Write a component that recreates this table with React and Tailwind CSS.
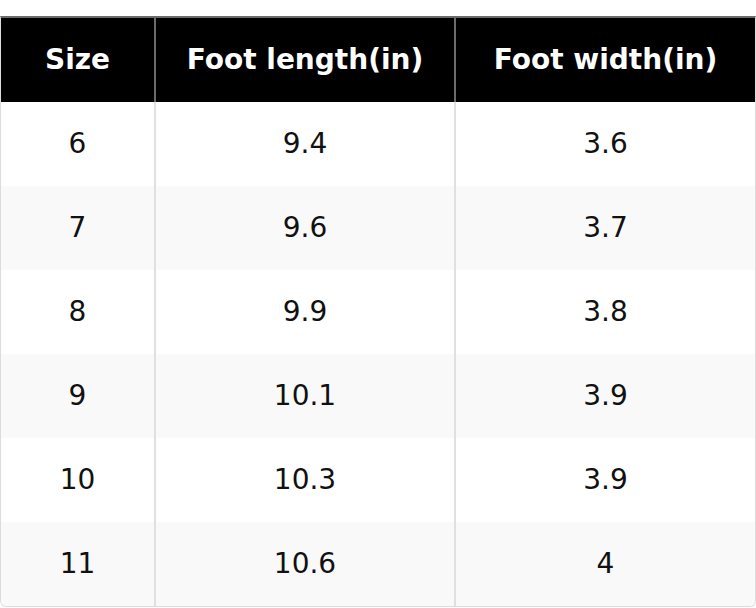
import React from "react";

const rows = [
  ["6", "9.4", "3.6"],
  ["7", "9.6", "3.7"],
  ["8", "9.9", "3.8"],
  ["9", "10.1", "3.9"],
  ["10", "10.3", "3.9"],
  ["11", "10.6", "4"],
];

const App = () => {
  return (
    <div className="min-h-screen bg-white pt-4" style={{ fontFamily: '"DejaVu Sans", sans-serif' }}>
      <div className="w-[756px] overflow-hidden rounded-b-md border border-t-2 border-[#dcdcdc] border-t-[#6b6b6b]">
        <div className="grid grid-cols-[155px_300px_1fr] bg-black text-white font-bold text-[28px]">
          <div className="h-[84px] flex items-center justify-center border-r-2 border-[#6b6b6b]">Size</div>
          <div className="h-[84px] flex items-center justify-center border-r-2 border-[#6b6b6b]">Foot length(in)</div>
          <div className="h-[84px] flex items-center justify-center">Foot width(in)</div>
        </div>
        {rows.map((r, i) => (
          <div
            key={i}
            className={`grid grid-cols-[155px_300px_1fr] text-[28px] text-[#111] ${i % 2 === 1 ? "bg-[#f9f9f9]" : "bg-white"}`}
          >
            <div className="h-[84px] flex items-center justify-center border-r-2 border-[#e0e0e0]">{r[0]}</div>
            <div className="h-[84px] flex items-center justify-center border-r-2 border-[#e0e0e0]">{r[1]}</div>
            <div className="h-[84px] flex items-center justify-center">{r[2]}</div>
          </div>
        ))}
      </div>
    </div>
  );
};

export default App;
